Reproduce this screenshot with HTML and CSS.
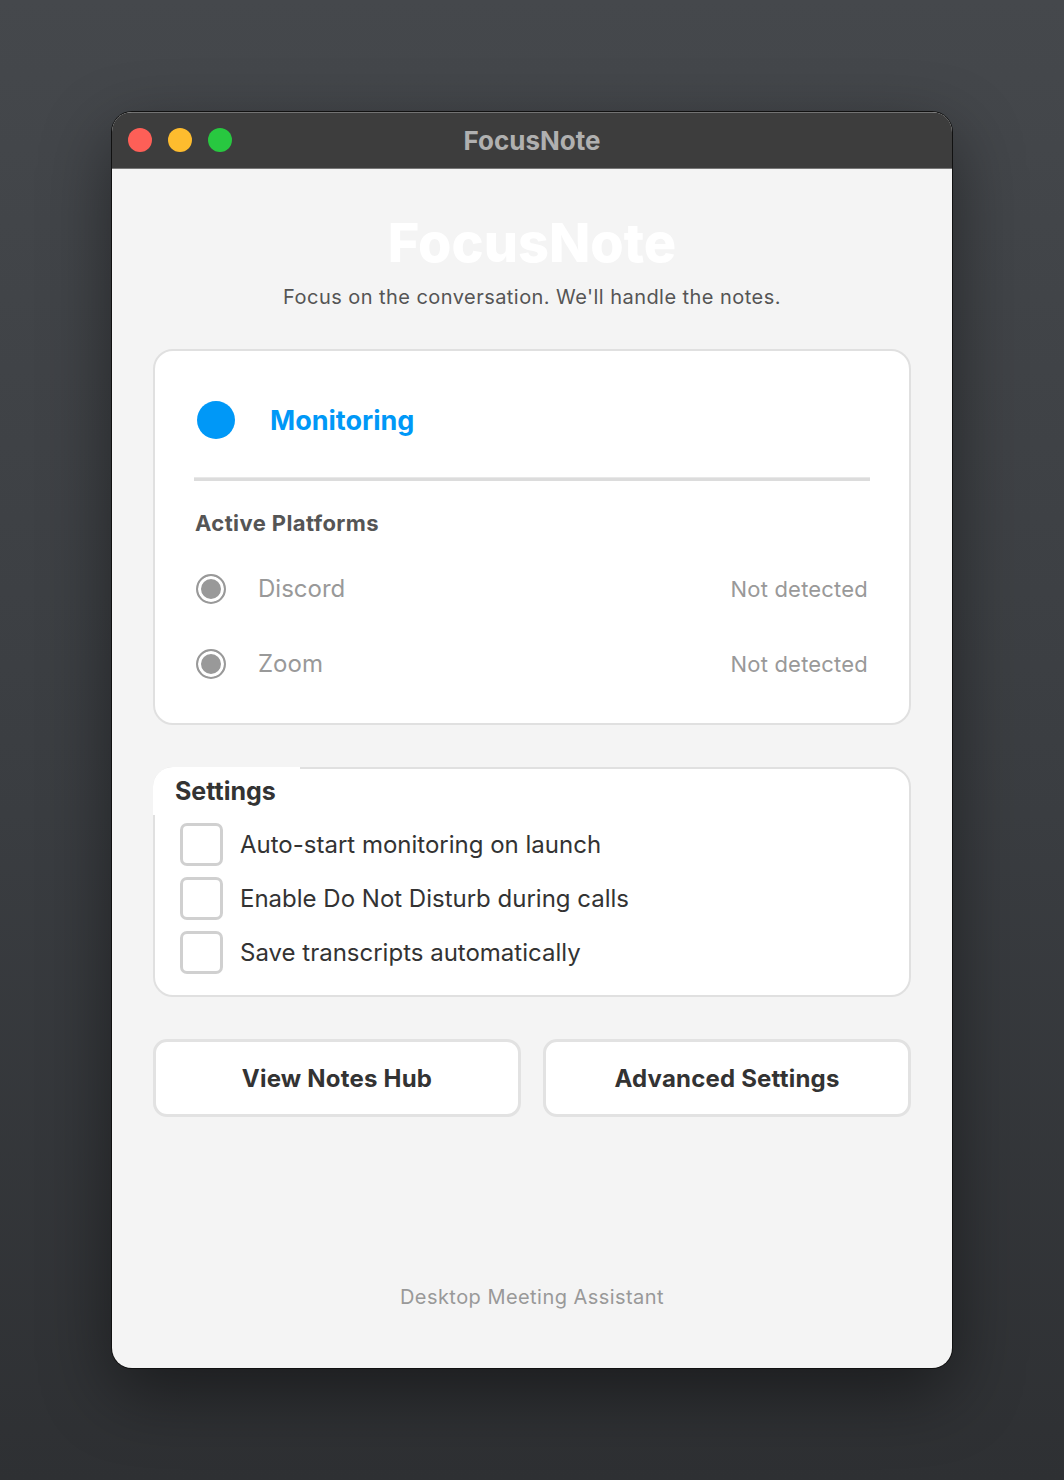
FILE: index.html
```html
<!DOCTYPE html>
<html>
  <head>
  <meta charset='utf-8'>
  <title>FocusNote</title>
  <link rel="stylesheet" href="styles.css">
  </head>

  <body>
  <div class="window">
    <div class="titlebar">
      <div class="lights">
        <span class="light red"></span>
        <span class="light yellow"></span>
        <span class="light green"></span>
      </div>
      <div class="title">FocusNote</div>
    </div>

    <div class="content">
      <h1 class="brand">FocusNote</h1>
      <p class="tagline">Focus on the conversation. We'll handle the notes.</p>

      <div class="card">
        <div class="status">
          <span class="status-dot"></span>
          <span class="status-text">Monitoring</span>
        </div>
        <div class="divider"></div>
        <h3 class="section-title">Active Platforms</h3>
        <ul class="platforms">
          <li><span class="radio"></span><span class="platform-name">Discord</span><span class="platform-state">Not detected</span></li>
          <li><span class="radio"></span><span class="platform-name">Zoom</span><span class="platform-state">Not detected</span></li>
        </ul>
      </div>

      <div class="settings">
        <div class="settings-title">Settings</div>
        <label class="option"><span class="check"></span>Auto-start monitoring on launch</label>
        <label class="option"><span class="check"></span>Enable Do Not Disturb during calls</label>
        <label class="option"><span class="check"></span>Save transcripts automatically</label>
      </div>

      <div class="actions">
        <button class="btn">View Notes Hub</button>
        <button class="btn">Advanced Settings</button>
      </div>

      <div class="footer">Desktop Meeting Assistant</div>
    </div>
  </div>
  </body>
</html>
```

FILE: styles.css
```css
html, body {
  margin: 0;
  height: 100%;
}

body {
  font-family: Inter, "Noto Sans", sans-serif;
  background: linear-gradient(180deg, #45484c 0%, #3a3d41 55%, #2e3033 100%);
  padding-top: 112px;
  box-sizing: border-box;
}

.window {
  width: 840px;
  margin: 0 auto;
  border-radius: 20px;
  overflow: hidden;
  background: #f4f4f4;
  box-shadow: 0 0 0 1px #111, 0 24px 70px rgba(0,0,0,0.45);
}

.titlebar {
  height: 56px;
  background: #3d3d3d;
  border-bottom: 1px solid #777;
  box-shadow: inset 0 1px 0 rgba(255,255,255,0.28);
  display: flex;
  align-items: center;
  position: relative;
}

.lights {
  display: flex;
  gap: 16px;
  padding-left: 16px;
}

.light {
  width: 24px;
  height: 24px;
  border-radius: 50%;
}
.red { background: #fe5f57; }
.yellow { background: #febc2e; }
.green { background: #28c840; }

.title {
  position: absolute;
  left: 0;
  right: 0;
  text-align: center;
  font-size: 26px;
  font-weight: 700;
  color: #b0b0b0;
  pointer-events: none;
}

.content {
  padding: 44px 41px 59px;
}

.brand {
  margin: 0;
  text-align: center;
  font-size: 54px;
  line-height: 60px;
  font-weight: 800;
  color: #fff;
}

.tagline {
  margin: 12px 0 0;
  text-align: center;
  font-size: 20px;
  line-height: 24px;
  letter-spacing: 0.45px;
  color: #555;
}

.card {
  margin-top: 40px;
  background: #fff;
  border: 2px solid #e0e0e0;
  border-radius: 20px;
  padding: 40px 40px 22px;
}

.status {
  display: flex;
  align-items: center;
  height: 58px;
}

.status-dot {
  width: 38px;
  height: 38px;
  margin-left: 2px;
  border-radius: 50%;
  background: #0098f7;
}

.status-text {
  margin-left: 35px;
  font-size: 27px;
  font-weight: 700;
  color: #0098f7;
}

.divider {
  margin: 28px -1px 0;
  border-top: 1px solid #e8e8e8;
  border-bottom: 3px solid #dcdcdc;
}

.section-title {
  margin: 28px 0 0;
  font-size: 22px;
  line-height: 28px;
  letter-spacing: 0.4px;
  font-weight: 700;
  color: #555;
}

.platforms {
  list-style: none;
  margin: 14px 0 0;
  padding: 0;
}

.platforms li {
  display: flex;
  align-items: center;
  height: 75px;
  color: #999;
}

.radio {
  width: 26px;
  height: 26px;
  margin-left: 1px;
  border: 2px solid #999;
  border-radius: 50%;
  background: #999;
  box-shadow: inset 0 0 0 3px #fff;
}

.platform-name {
  margin-left: 32px;
  font-size: 24px;
}

.platform-state {
  margin-left: auto;
  font-size: 22px;
  letter-spacing: 0.2px;
  padding-right: 1px;
}

.settings {
  margin-top: 42px;
  background: #fff;
  border: 2px solid #e0e0e0;
  border-radius: 20px;
  padding-bottom: 16px;
}

.settings-title {
  display: inline-block;
  margin: -2px 0 0 -2px;
  padding: 11px 24px 11px 22px;
  line-height: 26px;
  font-size: 25px;
  font-weight: 700;
  color: #333;
  background: #fff;
  border-top-left-radius: 20px;
}

.option {
  display: flex;
  align-items: center;
  height: 54px;
  padding-left: 25px;
  font-size: 24px;
  color: #333;
}

.option:first-of-type {
  margin-top: 2px;
}

.check {
  width: 37px;
  height: 37px;
  border: 3px solid #d0d0d0;
  border-radius: 7px;
  margin-right: 17px;
}

.actions {
  margin-top: 42px;
  display: grid;
  grid-template-columns: 1fr 1fr;
  gap: 22px;
}

.btn {
  height: 78px;
  background: #fff;
  border: 3px solid #e2e2e2;
  border-radius: 14px;
  font-family: inherit;
  font-size: 24px;
  font-weight: 700;
  letter-spacing: 0.2px;
  color: #333;
}

.footer {
  margin-top: 168px;
  text-align: center;
  font-size: 20px;
  line-height: 24px;
  letter-spacing: 0.45px;
  color: #999;
}
```
